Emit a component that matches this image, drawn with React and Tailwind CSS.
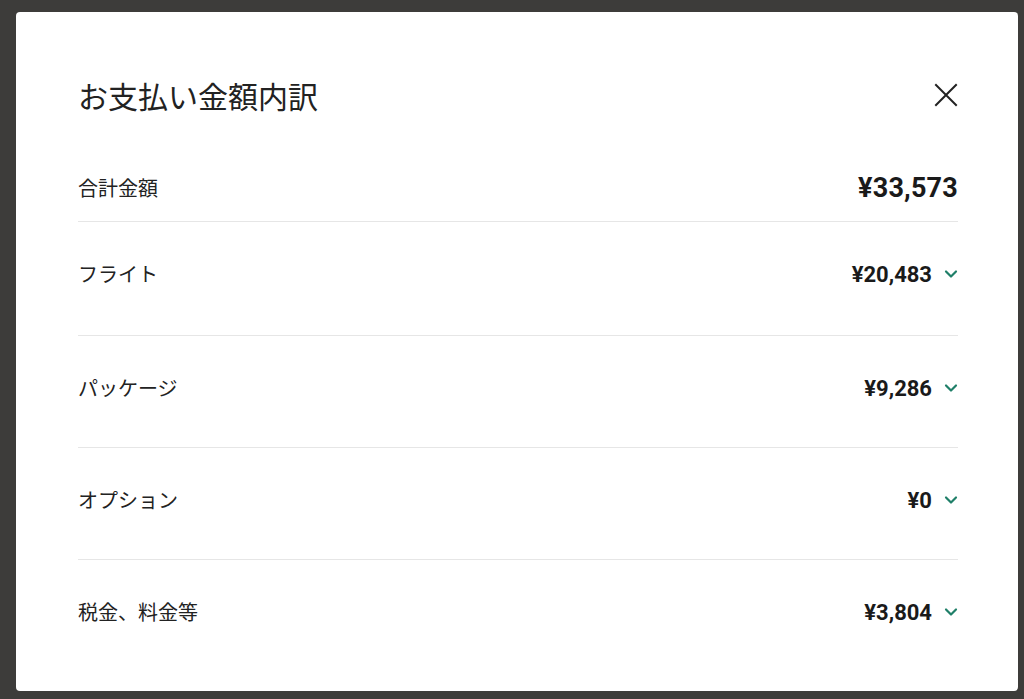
import React from "react";

const rows = [
  { label: "フライト", amount: "¥20,483", pb: "pb-[47px]" },
  { label: "パッケージ", amount: "¥9,286", pb: "pb-[45px]" },
  { label: "オプション", amount: "¥0", pb: "pb-[45px]" },
  { label: "税金、料金等", amount: "¥3,804", pb: "pb-[45px]" },
];

function Chevron() {
  return (
    <svg width="14" height="10" viewBox="0 0 14 10" className="shrink-0">
      <path d="M2 2.5 L7 7.5 L12 2.5" fill="none" stroke="#1f7f68" strokeWidth="2.2" strokeLinecap="round" strokeLinejoin="round" />
    </svg>
  );
}

export default function App() {
  return (
    <div className="w-[1024px] h-[699px] bg-[#3d3c3a] pt-[12px] pl-[16px] overflow-hidden" style={{ fontFamily: "Roboto, 'Noto Sans CJK JP', sans-serif" }}>
      <div className="w-[1002px] h-[679px] bg-white rounded-[4px] pl-[62px] pr-[60px] pt-[65px] flex flex-col">
        <div className="flex items-center justify-between h-[36px]">
          <h1 className="text-[30px] leading-[36px] text-[#222] font-normal" style={{ fontFamily: "'Noto Sans CJK JP', sans-serif" }}>お支払い金額内訳</h1>
          <svg width="24" height="24" viewBox="0 0 24 24">
            <path d="M2 2 L22 22 M22 2 L2 22" stroke="#222" strokeWidth="2" strokeLinecap="square" />
          </svg>
        </div>
        <div className="mt-[61px] h-[28px] flex items-center justify-between">
          <span className="text-[20px] text-[#222]" style={{ fontFamily: "'Noto Sans CJK JP', sans-serif" }}>合計金額</span>
          <span className="text-[27px] font-bold text-[#1a1a1a] tracking-[0.2px]">¥33,573</span>
        </div>
        <div className="h-[20px] border-b border-[#e6e6e6]" />
        {rows.map((r, i) => (
          <div key={i} className={`pt-[38px] ${r.pb} ${i < rows.length - 1 ? "border-b border-[#e6e6e6]" : ""}`}>
            <div className="h-[28px] flex items-center justify-between">
              <span className="text-[20px] text-[#222]" style={{ fontFamily: "'Noto Sans CJK JP', sans-serif" }}>{r.label}</span>
              <div className="flex items-center gap-[12px]">
                <span className="text-[22px] font-bold text-[#1a1a1a]">{r.amount}</span>
                <Chevron />
              </div>
            </div>
          </div>
        ))}
      </div>
    </div>
  );
}
